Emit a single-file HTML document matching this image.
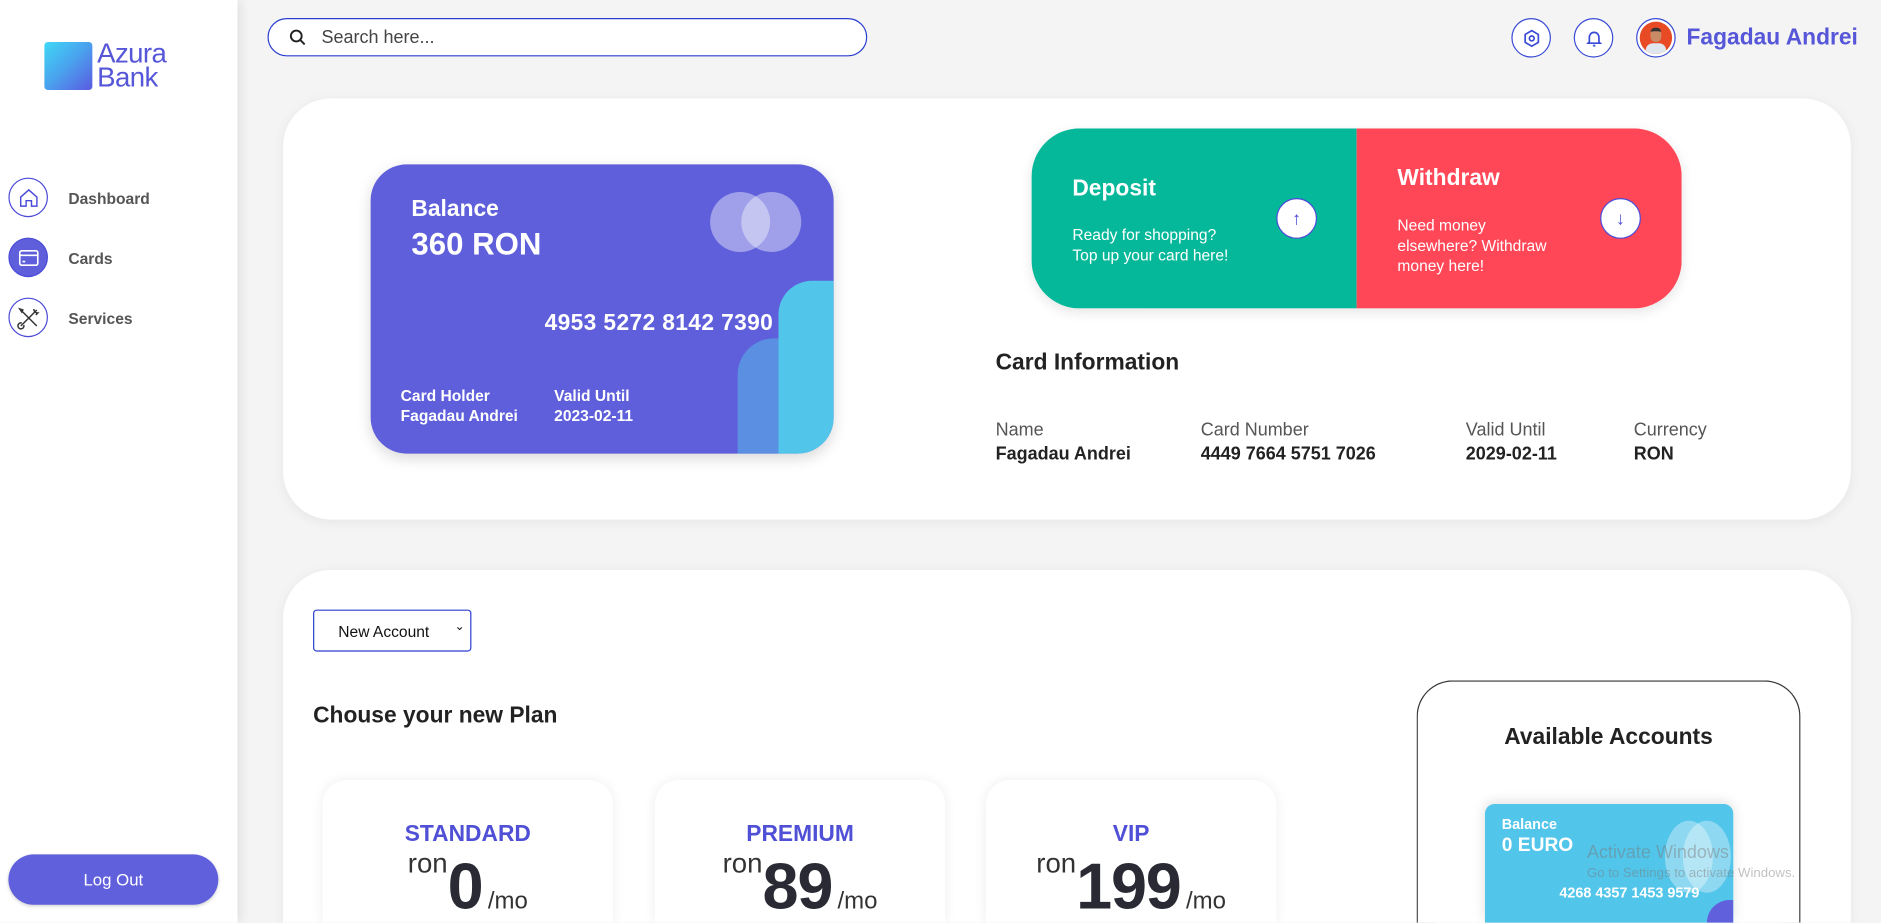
<!DOCTYPE html>
<html><head><meta charset="utf-8"><style>
*{box-sizing:border-box;margin:0;padding:0}
html,body{width:1881px;height:923px;overflow:hidden;background:#f4f4f4}
#w{position:absolute;left:0;top:0;width:1568px;height:769px;overflow:hidden;transform:scale(1.1995,1.2);transform-origin:0 0;font-family:"Liberation Sans",sans-serif;background:#f4f4f4}
.a{position:absolute}
.side{left:0;top:0;width:198px;height:769px;background:#fff;box-shadow:3px 0 8px rgba(0,0,0,.08)}
.nav{width:33px;height:33px;border-radius:50%;border:1.3px solid #4b4bd8;left:7px;display:flex;align-items:center;justify-content:center}
.nt{left:57px;font-size:13px;color:#555;font-weight:bold}
.panel{background:#fff;border-radius:40px;box-shadow:0 2px 10px rgba(0,0,0,.06)}
.b{font-weight:bold}
.w{color:#fff}
.hc{width:33px;height:33px;border-radius:50%;border:1.3px solid #3a4bd6;top:15px;display:flex;align-items:center;justify-content:center;background:#fff}
.plan{width:242px;height:119px;top:650px;background:#fff;border-radius:20px 20px 0 0;box-shadow:0 0 10px rgba(0,0,0,.07);text-align:center;overflow:hidden}
.pt{position:absolute;top:35px;width:100%;font-size:19px;font-weight:bold;color:#5050d6}
.pr{position:absolute;top:56px;width:100%;color:#2a2a35;white-space:nowrap}
.pr .r{font-size:23px;vertical-align:30px;color:#333}
.pr .n{font-size:54px;font-weight:bold;letter-spacing:-1px}
.pr .m{font-size:20px;color:#333}
.lab{font-size:15px;color:#555}
.val{font-size:15px;font-weight:bold;color:#222}
.arr{width:34px;height:34px;border-radius:50%;background:#fff;border:1.3px solid #4b4bd8;display:flex;align-items:center;justify-content:center;color:#4b4bd8;font-size:15px}
</style></head><body><div id="w">
<div class="a side"></div>
<div class="a" style="left:37px;top:35px;width:40px;height:40px;border-radius:3px;background:linear-gradient(135deg,#3fd8f5,#4aa0ee 50%,#5b5ae0)"></div>
<div class="a" style="left:81px;top:34px;font-size:23px;line-height:20px;color:#5656d8;letter-spacing:-0.5px">Azura<br>Bank</div>
<div class="a nav" style="top:148px"><svg width="18" height="18" viewBox="0 0 24 24" fill="none" stroke="#4b4bd8" stroke-width="1.6"><path d="M3 11l9-8 9 8v10h-6v-6h-6v6H3z"/></svg></div>
<div class="a nt" style="top:158px">Dashboard</div>
<div class="a nav" style="top:198px;background:#5f5fdc"><svg width="18" height="16" viewBox="0 0 24 20" fill="none" stroke="#fff" stroke-width="1.8"><rect x="2" y="2" width="20" height="16" rx="2"/><path d="M2 7h20M5 14h3"/></svg></div>
<div class="a nt" style="top:208px">Cards</div>
<div class="a nav" style="top:248px"><svg width="20" height="20" viewBox="0 0 24 24" fill="none" stroke="#333" stroke-width="1.5"><path d="M4 4l16 16M20 4L4 20M3 3l3 1-1 2zM17 3a4 4 0 0 0 4 4l-2 2M5 17a3 3 0 1 0 2 2"/></svg></div>
<div class="a nt" style="top:258px">Services</div>
<div class="a" style="left:7px;top:712px;width:175px;height:42px;border-radius:21px;background:#6060dd;color:#fff;font-size:14px;display:flex;align-items:center;justify-content:center;box-shadow:0 1px 3px rgba(0,0,0,.2)">Log Out</div>

<div class="a" style="left:223px;top:15px;width:500px;height:32px;border:1.5px solid #2a3fd0;border-radius:16px;background:#fff"></div>
<svg class="a" style="left:241px;top:24px" width="14" height="14" viewBox="0 0 14 14" fill="none" stroke="#222" stroke-width="1.6"><circle cx="6" cy="6" r="4.5"/><path d="M9.5 9.5L13 13"/></svg>
<div class="a" style="left:268px;top:23px;font-size:15px;color:#444">Search here...</div>
<div class="a hc" style="left:1260px"><svg width="16" height="16" viewBox="0 0 16 16" fill="none" stroke="#3a4bd6" stroke-width="1.4"><path d="M8 1.5l5.5 3.2v6.6L8 14.5 2.5 11.3V4.7z"/><circle cx="8" cy="8" r="2"/></svg></div>
<div class="a hc" style="left:1312px"><svg width="16" height="16" viewBox="0 0 16 16" fill="none" stroke="#3a4bd6" stroke-width="1.4"><path d="M4 11V7a4 4 0 0 1 8 0v4l1 1H3zM7 14h2"/></svg></div>
<div class="a hc" style="left:1364px"><div style="width:27px;height:27px;border-radius:50%;background:#e84a25;position:relative;overflow:hidden"><div style="position:absolute;left:9px;top:5px;width:9px;height:12px;border-radius:4px;background:#c98a66;border-top:3px solid #333"></div><div style="position:absolute;left:5px;top:18px;width:17px;height:9px;border-radius:6px 6px 0 0;background:#dfe6ee"></div></div></div>
<div class="a" style="left:1406px;top:21px;font-size:19px;font-weight:bold;color:#5656d8">Fagadau Andrei</div>

<div class="a panel" style="left:236px;top:82px;width:1307px;height:351px"></div>
<div class="a" style="left:309px;top:137px;width:386px;height:241px;border-radius:30px;background:#5f5fdc;overflow:hidden;box-shadow:0 4px 12px rgba(0,0,0,.15)">
 <div class="a" style="left:306px;top:145px;width:34px;height:96px;border-radius:30px 0 0 0;background:#5a8fe2"></div>
 <div class="a" style="left:340px;top:97px;width:46px;height:144px;border-radius:28px 0 0 0;background:#52c5ea"></div>
 <div class="a" style="left:283px;top:23px;width:50px;height:50px;border-radius:50%;background:rgba(255,255,255,.4)"></div>
 <div class="a" style="left:309px;top:23px;width:50px;height:50px;border-radius:50%;background:rgba(255,255,255,.4)"></div>
</div>
<div class="a b w" style="left:343px;top:164px;font-size:19px">Balance</div>
<div class="a b w" style="left:343px;top:188px;font-size:26px">360 RON</div>
<div class="a b w" style="left:454px;top:259px;font-size:19px;letter-spacing:0.3px">4953 5272 8142 7390</div>
<div class="a b w" style="left:334px;top:321px;font-size:13px;line-height:17px">Card Holder<br>Fagadau Andrei</div>
<div class="a b w" style="left:462px;top:321px;font-size:13px;line-height:17px">Valid Until<br>2023-02-11</div>

<div class="a" style="left:860px;top:107px;width:542px;height:150px;border-radius:40px;overflow:hidden;box-shadow:0 3px 10px rgba(0,0,0,.1)">
 <div class="a" style="left:0;top:0;width:271px;height:150px;background:#06b89a"></div>
 <div class="a" style="left:271px;top:0;width:271px;height:150px;background:#ff4757"></div>
</div>
<div class="a b w" style="left:894px;top:147px;font-size:19px">Deposit</div>
<div class="a w" style="left:894px;top:187px;font-size:13px;line-height:17px">Ready for shopping?<br>Top up your card here!</div>
<div class="a arr" style="left:1064px;top:165px">↑</div>
<div class="a b w" style="left:1165px;top:138px;font-size:19px">Withdraw</div>
<div class="a w" style="left:1165px;top:179px;font-size:13px;line-height:17px">Need money<br>elsewhere? Withdraw<br>money here!</div>
<div class="a arr" style="left:1334px;top:165px">↓</div>

<div class="a b" style="left:830px;top:292px;font-size:19px;color:#222">Card Information</div>
<div class="a lab" style="left:830px;top:350px">Name</div><div class="a val" style="left:830px;top:370px">Fagadau Andrei</div>
<div class="a lab" style="left:1001px;top:350px">Card Number</div><div class="a val" style="left:1001px;top:370px">4449 7664 5751 7026</div>
<div class="a lab" style="left:1222px;top:350px">Valid Until</div><div class="a val" style="left:1222px;top:370px">2029-02-11</div>
<div class="a lab" style="left:1362px;top:350px">Currency</div><div class="a val" style="left:1362px;top:370px">RON</div>

<div class="a panel" style="left:236px;top:475px;width:1307px;height:294px;border-radius:40px 40px 0 0"></div>
<div class="a" style="left:261px;top:508px;width:132px;height:35px;border:1px solid #2a3fd0;border-radius:3px;font-size:13px;color:#111;padding:10px 0 0 20px">New Account <span style="position:absolute;left:117px;top:8px;font-size:10px">&#8964;</span></div>
<div class="a b" style="left:261px;top:586px;font-size:19px;color:#222">Chouse your new Plan</div>
<div class="a plan" style="left:269px"><div class="pt">STANDARD</div><div class="pr"><span class="r">ron</span><span class="n">0</span> <span class="m">/mo</span></div></div>
<div class="a plan" style="left:546px"><div class="pt">PREMIUM</div><div class="pr"><span class="r">ron</span><span class="n">89</span> <span class="m">/mo</span></div></div>
<div class="a plan" style="left:822px"><div class="pt">VIP</div><div class="pr"><span class="r">ron</span><span class="n">199</span> <span class="m">/mo</span></div></div>

<div class="a" style="left:1181px;top:567px;width:320px;height:202px;border:1px solid #333;border-bottom:none;border-radius:30px 30px 0 0"></div>
<div class="a b" style="left:1181px;top:604px;width:320px;text-align:center;font-size:19px;color:#222">Available Accounts</div>
<div class="a" style="left:1238px;top:670px;width:207px;height:99px;border-radius:8px 8px 0 0;background:#52c5ea;overflow:hidden;box-shadow:0 -2px 10px rgba(0,0,0,.12)">
 <div class="a" style="left:150px;top:14px;width:40px;height:60px;border-radius:50%;background:rgba(255,255,255,.35)"></div>
 <div class="a" style="left:165px;top:14px;width:40px;height:60px;border-radius:50%;background:rgba(255,255,255,.35)"></div>
 <div class="a" style="left:185px;top:80px;width:22px;height:19px;border-radius:20px 0 0 0;background:#6060dd"></div>
</div>
<div class="a b w" style="left:1252px;top:680px;font-size:12px">Balance</div>
<div class="a b w" style="left:1252px;top:696px;font-size:16px">0 EURO</div>
<div class="a b w" style="left:1300px;top:737px;font-size:12px">4268 4357 1453 9579</div>
<div class="a" style="left:1323px;top:702px;font-size:15px;color:rgba(120,120,120,.45)">Activate Windows</div>
<div class="a" style="left:1323px;top:722px;font-size:11px;color:rgba(120,120,120,.45)">Go to Settings to activate Windows.</div>
</div></body></html>
